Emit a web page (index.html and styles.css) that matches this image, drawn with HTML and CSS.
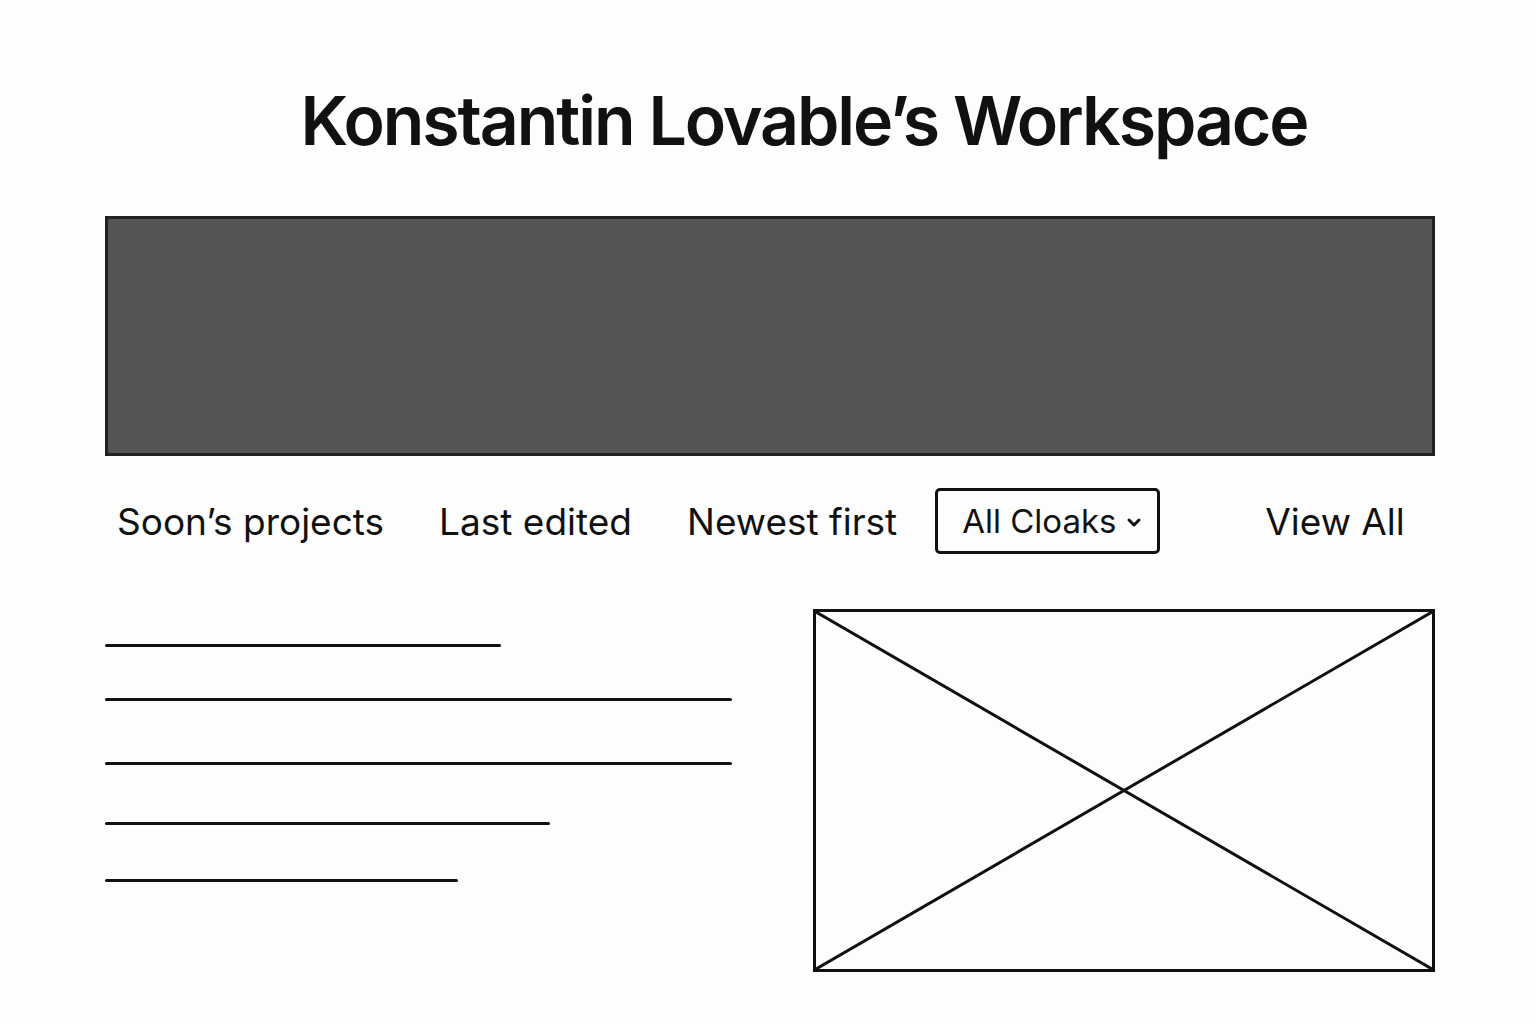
FILE: index.html
```html
<!DOCTYPE html>
<html lang="en">
<head>
  <meta charset="UTF-8" />
  <meta name="viewport" content="width=device-width, initial-scale=1.0"/>
  <title>Konstantin Lovable’s Workspace</title>
  <link rel="stylesheet" href="styles.css">
</head>
<body>
  <div class="page">
    <h1 class="titulo">Konstantin Lovable’s Workspace</h1>

    <div class="banner"></div>

    <div class="toolbar">
      <span class="tab">Soon’s projects</span>
      <span class="tab">Last edited</span>
      <span class="tab">Newest first</span>
      <button class="select">
        All Cloaks
        <svg class="chevron" width="16" height="11" viewBox="0 0 16 11">
          <path d="M3 3 L8 8 L13 3" fill="none" stroke="#111" stroke-width="3" stroke-linecap="round" stroke-linejoin="round"/>
        </svg>
      </button>
      <span class="tab view-all">View All</span>
    </div>

    <div class="content">
      <div class="lines">
        <div class="line line-1"></div>
        <div class="line line-2"></div>
        <div class="line line-3"></div>
        <div class="line line-4"></div>
        <div class="line line-5"></div>
      </div>

      <!-- placeholder de imagen -->
      <div class="image-box">
        <svg width="100%" height="100%" viewBox="0 0 616 357" preserveAspectRatio="none">
          <line x1="0" y1="0" x2="616" y2="357" stroke="#111" stroke-width="3"/>
          <line x1="616" y1="0" x2="0" y2="357" stroke="#111" stroke-width="3"/>
        </svg>
      </div>
    </div>
  </div>
</body>
</html>
```

FILE: styles.css
```css
body {
  margin: 0;
  background: #fdfdfd;
  color: #111;
  font-family: Inter, "Noto Sans", sans-serif;
}

.page {
  padding: 0 101px 0 105px;
  display: flex;
  flex-direction: column;
}

.titulo {
  margin: 78px 0 0;
  height: 138px;
  text-align: center;
  font-size: 68px;
  font-weight: 600;
  letter-spacing: -2.1px;
  line-height: 84px;
  padding-left: 68px;
}

/* Bloque oscuro */
.banner {
  height: 234px;
  background: #545454;
  border: 3px solid #222;
}

.toolbar {
  display: flex;
  align-items: center;
  height: 66px;
  margin-top: 32px;
  padding-left: 12px;
  gap: 55px;
  white-space: nowrap;
}

.tab {
  font-size: 37px;
  color: #111;
  flex-shrink: 0;
}

.select {
  flex-shrink: 0;
  margin-left: -17px;
  width: 225px;
  height: 66px;
  display: flex;
  align-items: center;
  gap: 9px;
  padding: 0 0 0 24px;
  font-family: inherit;
  font-size: 33px;
  color: #111;
  white-space: nowrap;
  background: transparent;
  border: 3px solid #111;
  border-radius: 5px;
}

.chevron {
  margin-top: 3px;
  flex-shrink: 0;
}

.view-all {
  margin-left: 50px;
}

.content {
  display: flex;
  gap: 81px;
  margin-top: 55px;
}

.lines {
  width: 627px;
  display: flex;
  flex-direction: column;
  padding-top: 35px;
}

.line {
  height: 3px;
  background: #111;
  border-radius: 2px;
}

.line-1 { width: 396px; }
.line-2 { width: 627px; margin-top: 51px; }
.line-3 { width: 627px; margin-top: 61px; }
.line-4 { width: 445px; margin-top: 57px; }
.line-5 { width: 353px; margin-top: 54px; }

.image-box {
  width: 616px;
  height: 357px;
  border: 3px solid #111;
}

.image-box svg {
  display: block;
}
```
